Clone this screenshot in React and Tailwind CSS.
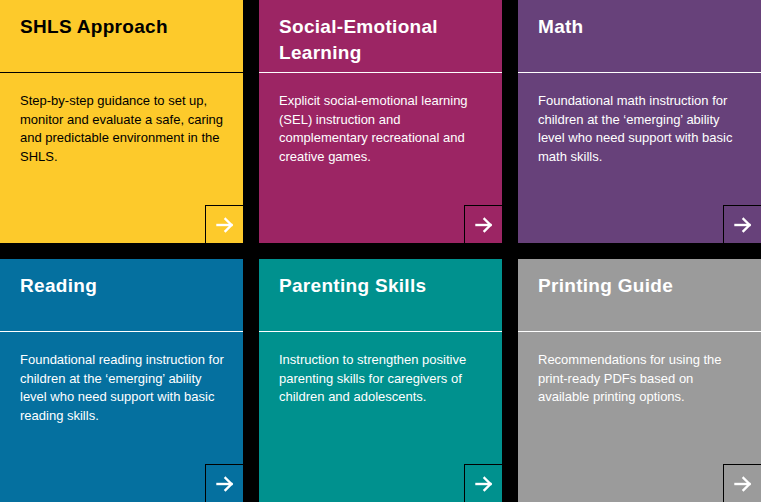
import React from 'react';

const cards = [
  {
    title: 'SHLS Approach',
    body: 'Step-by-step guidance to set up, monitor and evaluate a safe, caring and predictable environment in the SHLS.',
    bg: 'bg-[#fdca2b]',
    text: 'text-black',
    line: 'border-black',
  },
  {
    title: 'Social-Emotional Learning',
    body: 'Explicit social-emotional learning (SEL) instruction and complementary recreational and creative games.',
    bg: 'bg-[#9c2564]',
    text: 'text-white',
    line: 'border-white',
  },
  {
    title: 'Math',
    body: 'Foundational math instruction for children at the \u2018emerging\u2019 ability level who need support with basic math skills.',
    bg: 'bg-[#67417a]',
    text: 'text-white',
    line: 'border-white',
  },
  {
    title: 'Reading',
    body: 'Foundational reading instruction for children at the \u2018emerging\u2019 ability level who need support with basic reading skills.',
    bg: 'bg-[#05709f]',
    text: 'text-white',
    line: 'border-white',
  },
  {
    title: 'Parenting Skills',
    body: 'Instruction to strengthen positive parenting skills for caregivers of children and adolescents.',
    bg: 'bg-[#00918e]',
    text: 'text-white',
    line: 'border-white',
  },
  {
    title: 'Printing Guide',
    body: 'Recommendations for using the print-ready PDFs based on available printing options.',
    bg: 'bg-[#9b9b9b]',
    text: 'text-white',
    line: 'border-white',
  },
];

const Arrow = () => (
  <svg width="18" height="16" viewBox="0 0 18 16" fill="none" stroke="white" strokeWidth="2.4" strokeLinecap="square">
    <path d="M1.5 8h14" />
    <path d="M9.5 2l6 6-6 6" />
  </svg>
);

const Card = ({ card }) => (
  <div className={`${card.bg} ${card.text} flex flex-col h-[243px]`}>
    <div className={`h-[73px] border-b ${card.line} px-5 pt-[14px] shrink-0`}>
      <h3 className="text-[19px] leading-[26px] font-bold tracking-[0.3px]">{card.title}</h3>
    </div>
    <p className="px-5 pt-[19px] pr-4 text-[13px] leading-[18.5px]">{card.body}</p>
    <div className="mt-auto flex justify-end">
      <button className="w-[38px] h-[38px] border-l border-t border-black flex items-center justify-center">
        <Arrow />
      </button>
    </div>
  </div>
);

const App = () => {
  return (
    <div className="bg-black w-[761px] h-[502px] font-['Liberation_Sans',Arial,sans-serif]">
      <div className="grid grid-cols-3 gap-4">
        {cards.map((c) => (
          <Card key={c.title} card={c} />
        ))}
      </div>
    </div>
  );
};

export default App;
